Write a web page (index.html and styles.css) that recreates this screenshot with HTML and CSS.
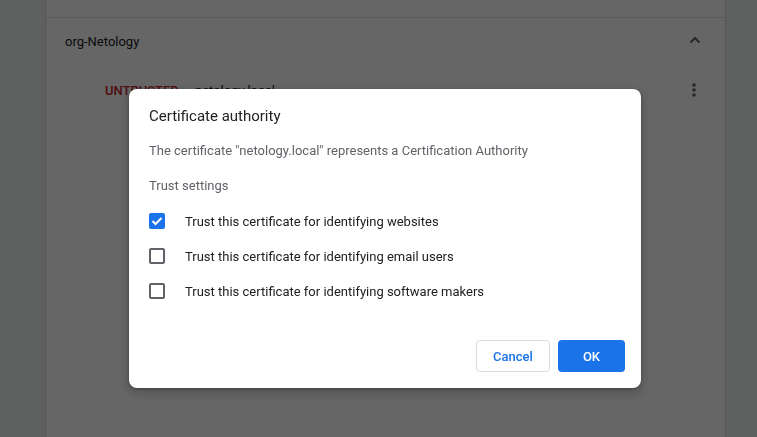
FILE: index.html
```html
<!DOCTYPE html>
<html>
<head>
<meta charset="utf-8">
<link rel="stylesheet" href="styles.css">
</head>
<body>
<div class="page">
  <div class="card">
    <div class="top-section"></div>
    <div class="org-row">
      <span class="org-name">org-Netology</span>
      <svg class="chevron" width="12" height="8" viewBox="0 0 12 8"><path d="M1.5 6.5 L6 2 L10.5 6.5" fill="none" stroke="#5f6368" stroke-width="2"/></svg>
    </div>
    <div class="cert-row">
      <span class="untrusted">UNTRUSTED</span>
      <span class="cert-name">netology.local</span>
      <svg class="dots" width="4" height="14" viewBox="0 0 4 14"><circle cx="2" cy="2" r="1.8" fill="#5f6368"/><circle cx="2" cy="7" r="1.8" fill="#5f6368"/><circle cx="2" cy="12" r="1.8" fill="#5f6368"/></svg>
    </div>
  </div>
</div>
<div class="overlay">
  <div class="dialog">
    <div class="title">Certificate authority</div>
    <div class="body">
      <div class="desc">The certificate "netology.local" represents a Certification Authority</div>
      <div class="desc subtitle">Trust settings</div>
      <div class="options">
        <label class="option"><span class="box checked"><svg width="12" height="10" viewBox="0 0 12 10"><path d="M1.5 5 L4.5 8 L10.5 2" fill="none" stroke="#fff" stroke-width="2"/></svg></span><span>Trust this certificate for identifying websites</span></label>
        <label class="option"><span class="box"></span><span>Trust this certificate for identifying email users</span></label>
        <label class="option"><span class="box"></span><span>Trust this certificate for identifying software makers</span></label>
      </div>
    </div>
    <div class="buttons">
      <button class="btn cancel">Cancel</button>
      <button class="btn ok">OK</button>
    </div>
  </div>
</div>
</body>
</html>
```
FILE: styles.css
```css
html, body {
  margin: 0;
  padding: 0;
  height: 100%;
  overflow: hidden;
}
body {
  background: #eef0f1;
  font-family: Roboto, "Liberation Sans", sans-serif;
  font-size: 13px;
  color: #202124;
}
.page {
  padding-left: 45px;
  height: 100%;
}
.card {
  width: 679px;
  height: 100%;
  background: #fff;
  border-left: 1px solid #d8d8d8;
  border-right: 1px solid #d8d8d8;
}
.top-section {
  height: 17px;
  border-bottom: 1px solid #e4e4e4;
}
.org-row {
  height: 46px;
  display: flex;
  align-items: center;
  justify-content: space-between;
  padding: 0 24px 0 19px;
}
.org-name {
  font-size: 13px;
  color: #202124;
}
.chevron {
  margin-top: -2px;
}
.cert-row {
  height: 52px;
  display: flex;
  align-items: center;
  padding: 0 29px 0 59px;
}
.untrusted {
  color: #c5221f;
  font-weight: 500;
  width: 90px;
}
.cert-name {
  flex: 1;
}
.overlay {
  position: fixed;
  inset: 0;
  background: rgba(0, 0, 0, 0.6);
}
.dialog {
  position: absolute;
  left: 129px;
  top: 89px;
  width: 512px;
  height: 299px;
  background: #fff;
  border-radius: 8px;
  box-shadow: 0 4px 8px 3px rgba(0, 0, 0, 0.15), 0 1px 3px rgba(0, 0, 0, 0.3);
  display: flex;
  flex-direction: column;
  box-sizing: border-box;
}
.title {
  font-size: 15px;
  color: #202124;
  padding: 17px 20px 0 20px;
  line-height: 20px;
}
.body {
  padding: 0 20px;
  flex: 1;
}
.desc {
  color: #5f6368;
  line-height: 20px;
  margin-top: 15px;
}
.subtitle {
  margin-top: 15px;
}
.options {
  margin-top: 17px;
  display: flex;
  flex-direction: column;
  gap: 19px;
}
.option {
  display: flex;
  align-items: center;
  height: 16px;
  color: #202124;
}
.box {
  width: 16px;
  height: 16px;
  box-sizing: border-box;
  border: 2px solid #5f6368;
  border-radius: 2px;
  margin-right: 20px;
  display: flex;
  align-items: center;
  justify-content: center;
}
.box.checked {
  background: #1a73e8;
  border-color: #1a73e8;
}
.buttons {
  display: flex;
  justify-content: flex-end;
  gap: 8px;
  padding: 0 16px 16px 0;
}
.btn {
  font-family: Roboto, "Liberation Sans", sans-serif;
  font-size: 13px;
  font-weight: 500;
  height: 32px;
  border-radius: 4px;
  padding: 0 16px;
  cursor: pointer;
}
.cancel {
  width: 74px;
  background: #fff;
  color: #1a73e8;
  border: 1px solid #dadce0;
}
.ok {
  width: 67px;
  background: #1a73e8;
  color: #fff;
  border: none;
}
```
